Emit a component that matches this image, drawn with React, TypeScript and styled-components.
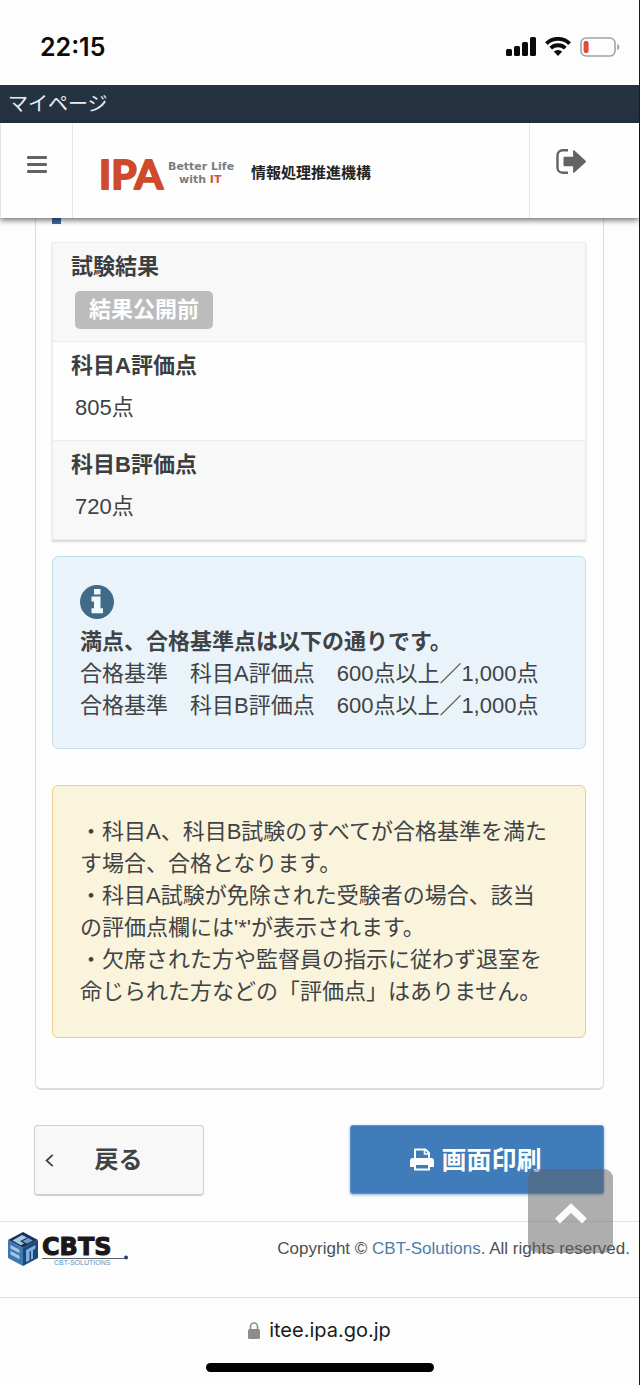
import React from "react";
import styled, { createGlobalStyle } from "styled-components";

const GlobalStyle = createGlobalStyle`
  *, *::before, *::after { box-sizing: border-box; }
  body {
    margin: 0;
    background: #fdfdfd;
    color: #404346;
    font-family: "Liberation Sans", "Noto Sans CJK JP", sans-serif;
    font-size: 22px;
    line-height: 32px;
    text-autospace: no-autospace;
    text-spacing-trim: space-all;
  }
  button { font: inherit; cursor: pointer; }
  svg { display: block; flex: none; }
`;

const Page = styled.div`
  border-right: 1px solid #1b1b1b;
  background: #fdfdfd;
`;

const StatusBar = styled.div`
  display: flex;
  justify-content: space-between;
  align-items: center;
  height: 85px;
  padding: 8px 19px 0 40px;
  color: #0b0b0b;
`;

const Clock = styled.time`
  font-family: Inter, sans-serif;
  font-size: 25px;
  font-weight: 600;
`;

const StatusIcons = styled.div`
  display: flex;
  align-items: center;
  gap: 9px;
`;

const TitleBar = styled.div`
  height: 38px;
  padding: 0 8px;
  background: #253242;
  color: #e9edf1;
  font-size: 20px;
  line-height: 38px;
`;

const Header = styled.header`
  position: relative;
  z-index: 1;
  display: flex;
  height: 95px;
  background: #fefefe;
  border-left: 1px solid #dfe5ec;
  box-shadow: 0 2px 6px rgba(0, 0, 0, 0.6);
`;

const HeaderButton = styled.button<{ $width: number; $side: "left" | "right" }>`
  display: flex;
  justify-content: ${(p) => (p.$side === "left" ? "center" : "flex-start")};
  align-items: center;
  flex: none;
  width: ${(p) => p.$width}px;
  padding: ${(p) => (p.$side === "left" ? "0 0 12px" : "0 0 18px 26px")};
  border: 0 solid #e3e8ee;
  border-right-width: ${(p) => (p.$side === "left" ? 1 : 0)}px;
  border-left-width: ${(p) => (p.$side === "right" ? 1 : 0)}px;
  background: none;
  color: #636363;
`;

const Brand = styled.a`
  flex: 1;
  display: flex;
  align-items: center;
  padding: 4px 0 0 24px;
  text-decoration: none;
`;

const Main = styled.main`
  padding: 0 35px;
`;

const Card = styled.section`
  padding: 0 17px 50px 16px;
  border: 1px solid #dcdcde;
  border-top: 0;
  border-bottom-width: 2px;
  border-radius: 0 0 6px 6px;
  background: #fefefe;
`;

const HeadingMark = styled.div`
  width: 9px;
  height: 6px;
  margin-bottom: 18px;
  background: #3f6ba3;
`;

const ScoreTable = styled.table`
  display: block;
  border: 1px solid #ececec;
  border-bottom: 0;
  box-shadow: 0 2px 2px rgba(0, 0, 0, 0.16);

  tbody { display: block; }
`;

const ScoreRow = styled.tr`
  display: flex;
  flex-direction: column;
  align-items: flex-start;
  height: 99px;
  padding: 8px 18px;
  border-bottom: 1px solid #ececec;
  background: #fefefe;

  &:nth-child(odd) { background: #f8f8f8; }
`;

const ScoreLabel = styled.th`
  padding: 0;
  color: #3c3f42;
  font-weight: 700;
  text-align: left;
`;

const ScoreValue = styled.td`
  padding: 10px 4px;
`;

const Badge = styled.span`
  display: block;
  margin-top: -2px;
  padding: 3px 14px;
  border-radius: 5px;
  background: #bcbcbc;
  color: #fefefe;
  font-weight: 700;
`;

const Notice = styled.div<{ $tone: "info" | "warning" }>`
  margin: ${(p) => (p.$tone === "info" ? "16px 0 36px" : "0")};
  padding: 28px 30px 26px 27px;
  border: 1px solid ${(p) => (p.$tone === "info" ? "#c3dfe9" : "#e8d08c")};
  border-radius: 6px;
  background: ${(p) => (p.$tone === "info" ? "#eaf3f9" : "#faf4dc")};

  p { margin: 0; }
  svg { margin-bottom: 7px; }
`;

const NoticeList = styled.div`
  padding: 2px 0 3px;
`;

const Actions = styled.div`
  display: flex;
  justify-content: space-between;
  align-items: flex-start;
  padding: 35px 0 25px;
`;

const BackButton = styled.button`
  display: flex;
  align-items: center;
  width: 170px;
  height: 71px;
  margin-left: -1px;
  padding: 0 10px;
  border: 1px solid #cfcfcf;
  border-bottom-width: 2px;
  border-radius: 4px;
  background: #f8f8f8;
  color: #404346;

  span {
    flex: 1;
    padding-right: 10px;
    font-size: 24px;
    font-weight: 700;
    text-align: center;
  }
`;

const PrintButton = styled.button`
  display: flex;
  justify-content: center;
  align-items: center;
  gap: 7px;
  width: 254px;
  height: 69px;
  padding: 0 8px 0 6px;
  border: 1px solid #5d92c9;
  border-radius: 3px;
  background: #417cba;
  box-shadow: 0 1px 3px rgba(65, 124, 186, 0.6);
  color: #fdfdfd;
  font-size: 25px;
  font-weight: 700;
`;

const Footer = styled.footer`
  position: relative;
  display: flex;
  justify-content: space-between;
  align-items: center;
  height: 76px;
  padding: 0 9px 22px 8px;
  border-top: 1px solid #dfe3e8;
`;

const Copyright = styled.small`
  color: #4d4f52;
  font-size: 17px;

  a { color: #4b7fa9; text-decoration: none; }
`;

const ToTop = styled.button`
  position: absolute;
  top: -53px;
  right: 26px;
  display: flex;
  justify-content: center;
  align-items: center;
  width: 85px;
  height: 84px;
  padding: 4px 0 0;
  border: 0;
  border-radius: 9px;
  background: rgba(96, 96, 96, 0.5);
  color: #fdfdfd;
`;

const BrowserBar = styled.div`
  display: flex;
  flex-direction: column;
  align-items: center;
  gap: 17px;
  padding: 16px 0 14px;
  border-top: 1px solid #dedede;
`;

const Address = styled.div`
  display: flex;
  align-items: center;
  gap: 9px;
  color: #1b1b1b;
  font-family: Inter, sans-serif;
  font-size: 20px;
`;

const HomeIndicator = styled.div`
  width: 228px;
  height: 9px;
  border-radius: 5px;
  background: #000;
`;

const SignalIcon = () => (
  <svg width="30" height="19" viewBox="0 0 30 19" fill="#0b0b0b" aria-hidden="true">
    <rect x="0" y="12" width="6" height="7" rx="1.5" />
    <rect x="8" y="9" width="6" height="10" rx="1.5" />
    <rect x="16" y="5" width="6" height="14" rx="1.5" />
    <rect x="24" y="0" width="6" height="19" rx="1.5" />
  </svg>
);

const WifiIcon = () => (
  <svg width="26" height="19" viewBox="0 0 26 19" aria-hidden="true">
    <g fill="none" stroke="#0b0b0b" strokeWidth="3.8">
      <path d="M1.4 6.6a16.5 16.5 0 0 1 23.2 0" />
      <path d="M5.7 11.2a10.5 10.5 0 0 1 14.6 0" />
    </g>
    <path d="M8.8 14.6a6.2 6.2 0 0 1 8.4 0L13 19z" fill="#0b0b0b" />
  </svg>
);

const BatteryIcon = () => (
  <svg width="40" height="20" viewBox="0 0 40 20" aria-hidden="true">
    <rect x="1" y="1" width="34" height="18" rx="5" fill="none" stroke="#a3a3a3" strokeWidth="1.6" />
    <rect x="3.6" y="4" width="5" height="12" rx="2" fill="#e2493a" />
    <path d="M37.2 7v6c3-1 3-5 0-6z" fill="#a3a3a3" />
  </svg>
);

const MenuIcon = () => (
  <svg width="20" height="17" viewBox="0 0 20 17" fill="currentColor" aria-hidden="true">
    <rect y="0" width="20" height="3" rx="1" />
    <rect y="7" width="20" height="3" rx="1" />
    <rect y="14" width="20" height="3" rx="1" />
  </svg>
);

const LogoutIcon = () => (
  <svg width="30" height="25" viewBox="0 0 30 25" aria-hidden="true">
    <path d="M12 1.3H6.5a5 5 0 0 0-5 5v12.4a5 5 0 0 0 5 5H12" fill="none" stroke="currentColor" strokeWidth="2.4" />
    <path d="M7.5 8.8q0-1 1-1h8.6V2q0-1.6 1.3-.5l11 10q1 1 0 2l-11 10q-1.3 1.1-1.3-.5v-5.8H8.5q-1 0-1-1z" fill="currentColor" />
  </svg>
);

const IpaLogo = () => (
  <svg width="290" height="56" viewBox="0 0 290 56" role="img" aria-label="IPA 情報処理推進機構">
    <text x="2" y="44" fontFamily="Lato, sans-serif" fontSize="41" fontWeight="700" fill="#cf4a2a" stroke="#cf4a2a" strokeWidth="2" strokeLinejoin="round">IPA</text>
    <g fontFamily='"DejaVu Sans", sans-serif' fontSize="11" fontWeight="700" fill="#7c7c7c">
      <text x="71" y="25">Better Life</text>
      <text x="82" y="38">with <tspan fill="#d2553a">IT</tspan></text>
    </g>
    <text x="154" y="33" fontFamily='"Noto Sans CJK JP", sans-serif' fontSize="15" fontWeight="700" fill="#222">情報処理推進機構</text>
  </svg>
);

const InfoIcon = () => (
  <svg width="34" height="34" viewBox="0 0 34 34" aria-hidden="true">
    <circle cx="17" cy="17" r="17" fill="#3f6a88" />
    <path d="M14 4h6.500v5.500H14zM11.500 11.500h9v11.700h2.500v5h-11.500v-5H14v-6.700h-2.500z" fill="#f2f9fd" />
  </svg>
);

const BackIcon = () => (
  <svg width="9" height="13" viewBox="0 0 9 13" fill="none" stroke="currentColor" strokeWidth="1.8" aria-hidden="true">
    <path d="M7.7.8 1.6 6.5l6.100 5.700" />
  </svg>
);

const PrintIcon = () => (
  <svg width="24" height="23" viewBox="0 0 24 23" aria-hidden="true">
    <path d="M5 11V1.500h10.500L19 5v6" fill="none" stroke="currentColor" strokeWidth="2" strokeLinejoin="round" />
    <path d="M14.500 1.500V6H19" fill="none" stroke="currentColor" strokeWidth="1.600" />
    <path d="M3 10h18a3 3 0 0 1 3 3v6h-4v-3.500H4V19H0v-6a3 3 0 0 1 3-3z" fill="currentColor" />
    <rect x="5" y="16" width="14" height="5.500" fill="none" stroke="currentColor" strokeWidth="2" />
  </svg>
);

const UpIcon = () => (
  <svg width="32" height="21" viewBox="0 0 32 21" fill="none" stroke="currentColor" strokeWidth="7" aria-hidden="true">
    <path d="M2.500 18 16 5l13.500 13" />
  </svg>
);

const CbtsLogo = () => (
  <svg width="122" height="36" viewBox="0 0 122 36" role="img" aria-label="CBTS CBT-SOLUTIONS">
    <path d="M15 1 30 9 15 17 0 9z" fill="#16335c" />
    <path d="M0 9l15 8v18L0 27z" fill="#3f78ae" />
    <path d="M30 9l-15 8v18l15-8z" fill="#1d477c" />
    <path d="M14 4l5 2.500-7 3.800 4 2.200-3 1.700-8.500-4.600z" fill="#a9cbe4" />
    <path d="M20 7l5 2.500-6 3.200-4.500-2.500z" fill="#6d9dc8" />
    <path d="M2.500 14l9 4.800v3.500l-9-4.800zM2.500 20l9 4.800v3.500l-9-4.800z" fill="#a3cbe8" />
    <path d="M18 19l9.500-5v3.500l-2.500 1.400v8.600l-2 1.100v-8.600l-1.500.8v8.600l-3.500 1.900z" fill="#7eb0da" />
    <text x="34" y="24" fontFamily='"DejaVu Sans", sans-serif' fontSize="24" fontWeight="700" fill="#1c1718" stroke="#1c1718" strokeWidth="1">CBTS</text>
    <path d="M34 27.500h82" stroke="#55606c" strokeWidth="1" />
    <circle cx="118" cy="26.500" r="2" fill="#24436c" />
    <text x="46" y="34" fontFamily='"Liberation Sans", sans-serif' fontSize="7" fill="#5f93c0">CBT-SOLUTIONS</text>
  </svg>
);

const LockIcon = () => (
  <svg width="12" height="17" viewBox="0 0 12 17" aria-hidden="true">
    <rect y="7" width="12" height="10" rx="1.500" fill="#8c8c8c" />
    <path d="M2.500 8V4.500a3.500 3.500 0 0 1 7 0V8" fill="none" stroke="#8c8c8c" strokeWidth="1.600" />
  </svg>
);

export default function App() {
  return (
    <Page>
      <GlobalStyle />
      <StatusBar>
        <Clock>22:15</Clock>
        <StatusIcons>
          <SignalIcon />
          <WifiIcon />
          <BatteryIcon />
        </StatusIcons>
      </StatusBar>
      <TitleBar>マイページ</TitleBar>
      <Header>
        <HeaderButton $width={72} $side="left" aria-label="メニュー">
          <MenuIcon />
        </HeaderButton>
        <Brand href="#">
          <IpaLogo />
        </Brand>
        <HeaderButton $width={110} $side="right" aria-label="ログアウト">
          <LogoutIcon />
        </HeaderButton>
      </Header>
      <Main>
        <Card>
          <HeadingMark />
          <ScoreTable>
            <tbody>
              <ScoreRow>
                <ScoreLabel scope="row">試験結果</ScoreLabel>
                <ScoreValue><Badge>結果公開前</Badge></ScoreValue>
              </ScoreRow>
              <ScoreRow>
                <ScoreLabel scope="row">科目A評価点</ScoreLabel>
                <ScoreValue>805点</ScoreValue>
              </ScoreRow>
              <ScoreRow>
                <ScoreLabel scope="row">科目B評価点</ScoreLabel>
                <ScoreValue>720点</ScoreValue>
              </ScoreRow>
            </tbody>
          </ScoreTable>
          <Notice $tone="info">
            <InfoIcon />
            <p><strong>満点、合格基準点は以下の通りです。</strong></p>
            <p>合格基準　科目A評価点　600点以上／1,000点</p>
            <p>合格基準　科目B評価点　600点以上／1,000点</p>
          </Notice>
          <Notice $tone="warning">
            <NoticeList>
              <p>・科目A、科目B試験のすべてが合格基準を満たす場合、合格となります。</p>
              <p>・科目A試験が免除された受験者の場合、該当の評価点欄には'*'が表示されます。</p>
              <p>・欠席された方や監督員の指示に従わず退室を命じられた方などの「評価点」はありません。</p>
            </NoticeList>
          </Notice>
        </Card>
        <Actions>
          <BackButton>
            <BackIcon />
            <span>戻る</span>
          </BackButton>
          <PrintButton>
            <PrintIcon />
            画面印刷
          </PrintButton>
        </Actions>
      </Main>
      <Footer>
        <CbtsLogo />
        <Copyright>
          Copyright © <a href="#">CBT-Solutions</a>. All rights reserved.
        </Copyright>
        <ToTop aria-label="ページの先頭へ">
          <UpIcon />
        </ToTop>
      </Footer>
      <BrowserBar>
        <Address>
          <LockIcon />
          itee.ipa.go.jp
        </Address>
        <HomeIndicator />
      </BrowserBar>
    </Page>
  );
}
